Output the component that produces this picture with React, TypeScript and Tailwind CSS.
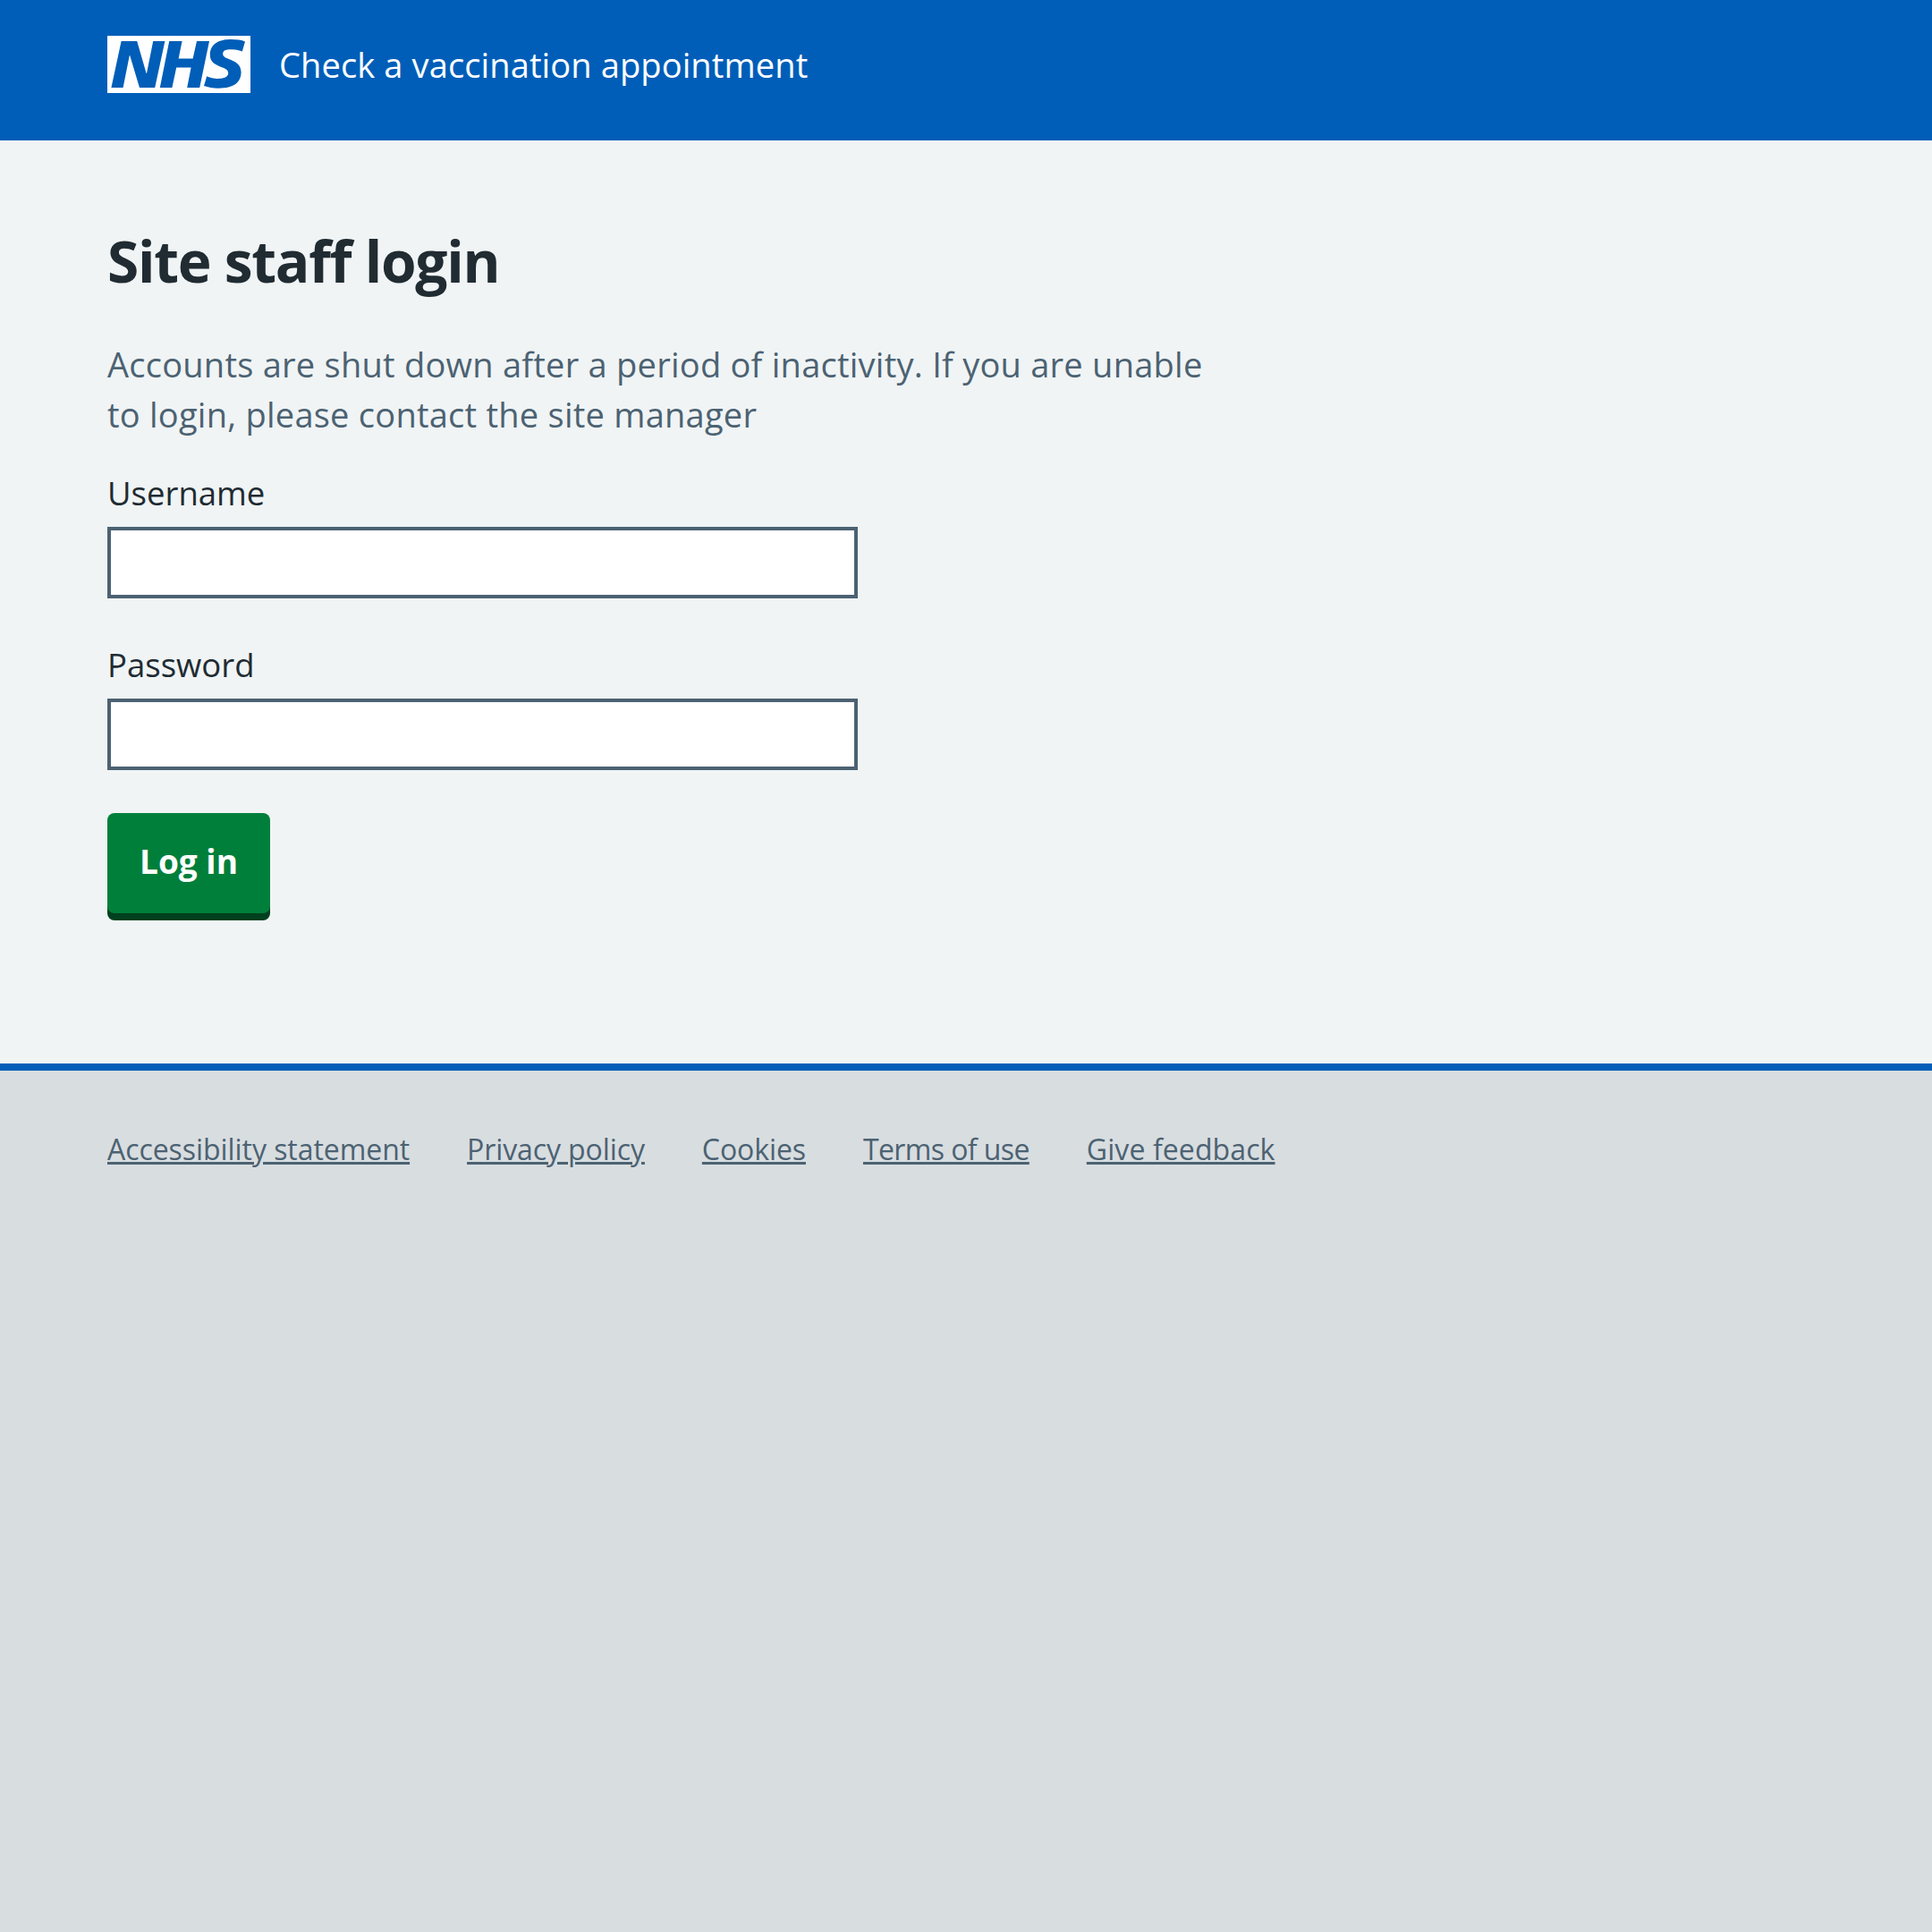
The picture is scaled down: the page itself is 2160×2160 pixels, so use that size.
export default function App() {
  return (
    <div className="min-h-[2160px] flex flex-col bg-[#d8dde0] font-['Open_Sans','Noto_Sans',sans-serif]">
      <header className="bg-[#005eb8] h-[157px] pl-[120px] pt-[40px] flex items-start gap-[32px]">
        <svg width="160" height="64" viewBox="0 0 40 16" className="shrink-0">
          <path fill="#fff" d="M0 0h40v16H0z" />
          <path fill="#005eb8" d="M3.9 1.5h4.4l2.6 9h.1l1.8-9h3.3l-2.8 13H9l-2.7-9h-.1l-1.8 9H1.1M17.3 1.5h3.6l-1 4.9h4L25 1.5h3.5l-2.7 13h-3.5l1.1-5.6h-4.1l-1.2 5.6h-3.4M37.7 4.4c-.7-.3-1.6-.6-2.9-.6-1.4 0-2.5.2-2.5 1.3 0 1.8 5.1 1.2 5.1 5.1 0 3.6-3.3 4.5-6.4 4.5-1.3 0-2.9-.3-4-.7l.8-2.7c.7.4 2.1.7 3.2.7s2.8-.2 2.8-1.6c0-2.1-5.1-1.3-5.1-5 0-3.4 2.9-4.4 5.8-4.4 1.6 0 3.1.2 4 .6" />
        </svg>
        <span className="text-white text-[38px] leading-[54px] mt-[5px] tracking-[0.12px]">Check a vaccination appointment</span>
      </header>
      <main className="bg-[#f0f4f5] h-[1032px] pl-[120px] pt-[97px]">
        <h1 className="text-[#212b32] text-[64px] leading-[76px] font-bold tracking-[-1.25px] mb-[49px]">Site staff login</h1>
        <p className="text-[#4c6272] text-[38px] leading-[56px] tracking-[0.25px] w-[1260px] mb-[32px]">Accounts are shut down after a period of inactivity. If you are unable to login, please contact the site manager</p>
        <label className="block text-[#212b32] text-[36.5px] leading-[56px] mb-[10px]">Username</label>
        <input className="block w-[839px] h-[80px] border-[4px] border-[#4c6272] bg-white mb-[46px]" />
        <label className="block text-[#212b32] text-[36.5px] leading-[56px] mb-[10px]">Password</label>
        <input className="block w-[839px] h-[80px] border-[4px] border-[#4c6272] bg-white mb-[48px]" />
        <button className="w-[182px] h-[112px] pb-[4px] bg-[#007f3b] rounded-[8px] text-white text-[37px] font-bold shadow-[0_8px_0_#00401e]">Log in</button>
      </main>
      <footer className="border-t-[8px] border-[#005eb8] pl-[120px] pt-[64px] flex gap-[64px] text-[32px] leading-[48px] text-[#4c6272]">
        <a className="underline decoration-[3px] tracking-[-0.06px]">Accessibility statement</a>
        <a className="underline decoration-[3px] tracking-[-0.1px]">Privacy policy</a>
        <a className="underline decoration-[3px] tracking-[-0.1px]">Cookies</a>
        <a className="underline decoration-[3px] tracking-[-0.6px]">Terms of use</a>
        <a className="underline decoration-[3px] tracking-[0.1px]">Give feedback</a>
      </footer>
    </div>
  );
}
